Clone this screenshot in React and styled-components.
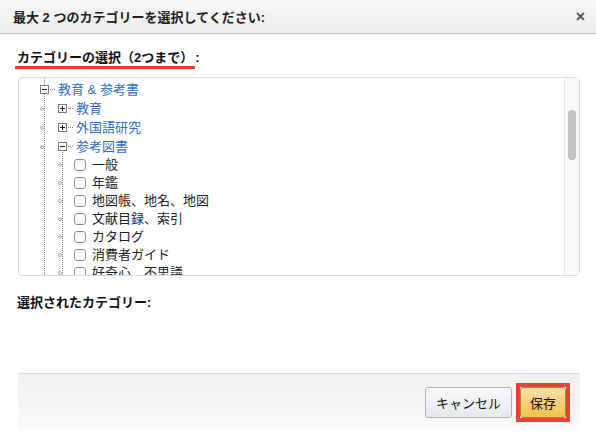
import React from 'react';
import styled, { createGlobalStyle } from 'styled-components';

const GlobalStyle = createGlobalStyle`
  html, body {
    margin: 0;
    padding: 0;
    background: #fff;
  }
  body {
    font-family: "Liberation Sans", "Noto Sans CJK JP", sans-serif;
    font-size: 13px;
    color: #111;
  }
`;

const Dialog = styled.div`
  width: 596px;
  height: 446px;
  display: flex;
  flex-direction: column;
  background: #fff;
`;

const Header = styled.div`
  height: 33px;
  flex: none;
  display: flex;
  align-items: center;
  justify-content: space-between;
  padding: 0 11px 0 13px;
  background: linear-gradient(to bottom, #f7f7f7, #ececec);
  border-bottom: 1px solid #c9c9c9;
  box-shadow: 0 1px 1px rgba(0, 0, 0, 0.05);
`;

const Title = styled.h4`
  margin: 0;
  font-size: 13px;
  font-weight: bold;
  color: #222;
`;

const Close = styled.span`
  font-size: 16px;
  font-weight: bold;
  color: #555;
  line-height: 1;
`;

const Body = styled.div`
  display: flex;
  flex-direction: column;
  padding: 0 16px 0 18px;
`;

const SectionLabel = styled.div`
  margin: 15px 0 0 -1px;
  font-weight: bold;
  color: #111;
  line-height: 18px;
`;

const Marked = styled.span`
  display: inline-block;
  padding: 0 2px;
  margin-left: -2px;
  border-bottom: 3px solid #e4412f;
  line-height: 17px;
`;

const TreeBox = styled.div`
  margin-top: 8px;
  height: 197px;
  border: 1px solid #dcdcdc;
  border-radius: 4px;
  display: flex;
  overflow: hidden;
`;

const TreeList = styled.div`
  flex: 1;
  overflow: hidden;
  padding-top: 2px;
  background: repeating-linear-gradient(to bottom, #8c8c8c 0 1px, transparent 1px 2px) 25px 0 / 1px 100% no-repeat;
`;

const Group = styled.div`
  margin-top: -4px;
  padding-top: 4px;
  background: repeating-linear-gradient(to bottom, #8c8c8c 0 1px, transparent 1px 2px) 43px 0 / 1px 100% no-repeat;
`;

const Row = styled.div`
  height: ${(p) => p.$h}px;
  display: flex;
  align-items: center;
  padding-left: ${(p) => p.$indent}px;
  white-space: nowrap;
`;

const Dot = styled.span`
  width: 4px;
  height: 4px;
  border: 1px solid #a8a8a8;
  border-radius: 50%;
  box-sizing: border-box;
  margin-right: ${(p) => p.$gap}px;
  background: #fff;
`;

const Connector = styled.span`
  width: 6px;
  height: 1px;
  margin: 0 2px 0 1px;
  background: repeating-linear-gradient(to right, #8c8c8c 0 1px, transparent 1px 2px);
`;

const FolderLink = styled.a`
  color: #2c6fc0;
  text-decoration: none;
  line-height: 18px;
`;

const Check = styled.span`
  width: 12px;
  height: 12px;
  box-sizing: border-box;
  border: 1px solid #8f8f8f;
  border-radius: 3px;
  background: #fff;
  margin-right: 6px;
`;

const LeafText = styled.span`
  color: #222;
  line-height: 18px;
`;

const ScrollTrack = styled.div`
  width: 14px;
  flex: none;
  background: #f8f8f8;
  border-left: 1px solid #e6e6e6;
  display: flex;
  justify-content: center;
`;

const ScrollThumb = styled.div`
  width: 8px;
  height: 50px;
  margin-top: 32px;
  border-radius: 4px;
  background: #c2c2c2;
`;

const SelectedLabel = styled.div`
  margin: 18px 0 0 -1px;
  font-weight: bold;
  line-height: 18px;
`;

const Footer = styled.div`
  margin: 61px 16px 0 18px;
  height: 57px;
  flex: none;
  display: flex;
  align-items: center;
  justify-content: flex-end;
  gap: 4px;
  padding-right: 10px;
  border-top: 1px solid #dcdcdc;
  background: linear-gradient(to bottom, #f1f1f1, #f6f6f6 70%, #fcfcfc);
`;

const Highlight = styled.span`
  display: flex;
  border: 4px solid #e8413a;
`;

const Button = styled.button`
  font-family: inherit;
  font-size: 13px;
  color: #111;
  height: 31px;
  padding: 0 ${(p) => (p.$primary ? 9 : 10)}px;
  border-radius: 3px;
  border: 1px solid ${(p) => (p.$primary ? '#a88734' : '#adb1b8')};
  background: ${(p) =>
    p.$primary
      ? 'linear-gradient(to bottom, #f7dfa5, #f0c14b)'
      : 'linear-gradient(to bottom, #f7f8fa, #e7e9ec)'};
  cursor: pointer;
`;

const Expander = ({ open }) => (
  <svg width="9" height="9" viewBox="0 0 9 9" style={{ flex: 'none' }}>
    <rect x="0.5" y="0.5" width="8" height="8" fill="#fff" stroke="#7a7a7a" />
    <line x1="2" y1="4.5" x2="7" y2="4.5" stroke="#222" />
    {!open && <line x1="4.5" y1="2" x2="4.5" y2="7" stroke="#222" />}
  </svg>
);

const leaves = [
  '一般',
  '年鑑',
  '地図帳、地名、地図',
  '文献目録、索引',
  'カタログ',
  '消費者ガイド',
  '好奇心、不思議',
  '辞書',
];

const App = () => (
  <Dialog>
    <GlobalStyle />
    <Header>
      <Title>最大 2 つのカテゴリーを選択してください:</Title>
      <Close>×</Close>
    </Header>
    <Body>
      <SectionLabel>
        <Marked>カテゴリーの選択（2つまで）</Marked>:
      </SectionLabel>
      <TreeBox>
        <TreeList>
          <Row $h={19} $indent={21}>
            <Expander open />
            <Connector />
            <FolderLink>教育 &amp; 参考書</FolderLink>
          </Row>
          <Row $h={19} $indent={21}>
            <Dot $gap={14} />
            <Expander />
            <Connector />
            <FolderLink>教育</FolderLink>
          </Row>
          <Row $h={19} $indent={21}>
            <Dot $gap={14} />
            <Expander />
            <Connector />
            <FolderLink>外国語研究</FolderLink>
          </Row>
          <Row $h={19} $indent={21}>
            <Dot $gap={14} />
            <Expander open />
            <Connector />
            <FolderLink>参考図書</FolderLink>
          </Row>
          <Group>
            {leaves.map((name) => (
              <Row key={name} $h={18} $indent={39}>
                <Dot $gap={12} />
                <Check />
                <LeafText>{name}</LeafText>
              </Row>
            ))}
          </Group>
        </TreeList>
        <ScrollTrack>
          <ScrollThumb />
        </ScrollTrack>
      </TreeBox>
      <SelectedLabel>選択されたカテゴリー:</SelectedLabel>
    </Body>
    <Footer>
      <Button>キャンセル</Button>
      <Highlight>
        <Button $primary>保存</Button>
      </Highlight>
    </Footer>
  </Dialog>
);

export default App;
